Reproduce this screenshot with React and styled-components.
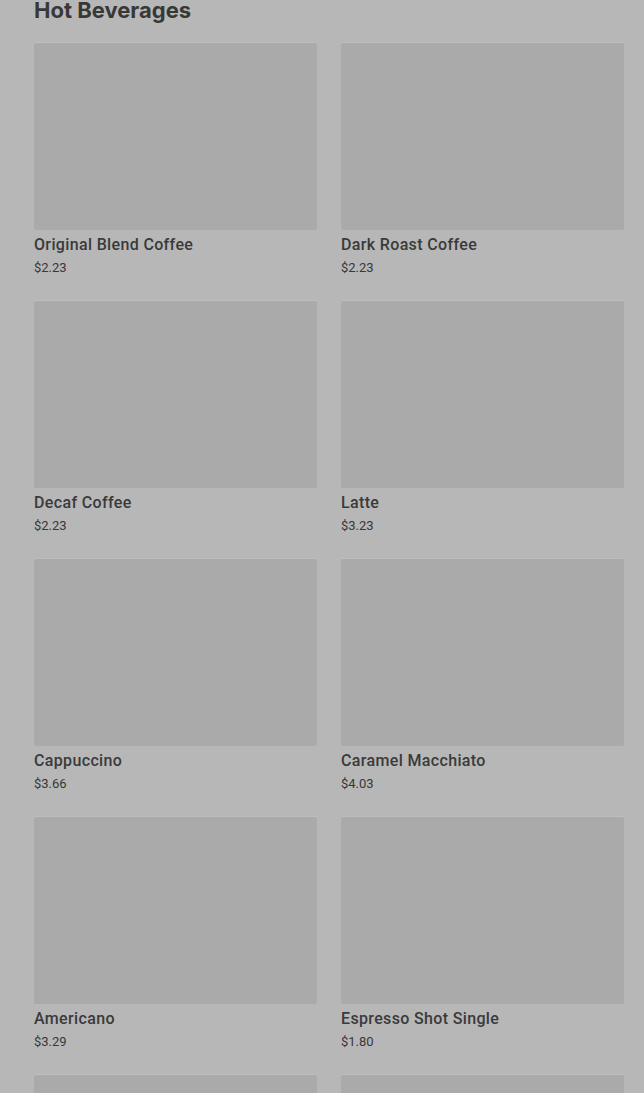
import React from 'react';
import styled, { createGlobalStyle } from 'styled-components';

const GlobalStyle = createGlobalStyle`
  html, body {
    margin: 0;
    padding: 0;
    background: #b7b7b7;
  }
  body {
    font-family: Roboto, "Liberation Sans", sans-serif;
    overflow: hidden;
  }
`;

const Wrapper = styled.div`
  padding: 0 20px 0 34px;
  height: 1093px;
  overflow: hidden;

  .heading {
    margin: 0;
    font-family: Inter, "Liberation Sans", sans-serif;
    font-weight: 700;
    font-size: 22px;
    line-height: 20px;
    color: #383838;
    letter-spacing: 0;
    height: 43px;
  }
`;

const Grid = styled.div`
  display: grid;
  grid-template-columns: 283px 283px;
  column-gap: 24px;
  row-gap: 24px;
`;

const Card = styled.div`
  display: flex;
  flex-direction: column;
  height: 234px;
`;

const Thumb = styled.div`
  flex-shrink: 0;
  height: 187px;
  background: #aaaaaa;
  border-radius: 2px;
  box-shadow: 0 -1px 0 #bdbdbd;
`;

const Name = styled.div`
  margin-top: 5px;
  font-size: 16px;
  line-height: 20px;
  font-weight: 500;
  letter-spacing: 0.35px;
  color: #3a3a3a;
`;

const Price = styled.div`
  margin-top: 4px;
  font-size: 13px;
  line-height: 18px;
  color: #383838;
`;

const items = [
  ['Original Blend Coffee', '$2.23'],
  ['Dark Roast Coffee', '$2.23'],
  ['Decaf Coffee', '$2.23'],
  ['Latte', '$3.23'],
  ['Cappuccino', '$3.66'],
  ['Caramel Macchiato', '$4.03'],
  ['Americano', '$3.29'],
  ['Espresso Shot Single', '$1.80'],
  ['Espresso Shot Double', '$2.10'],
  ['Mocha', '$3.89'],
];

export default function App() {
  return (
    <Wrapper>
      <GlobalStyle />
      <h2 className="heading">Hot Beverages</h2>
      <Grid>
        {items.map(([name, price]) => (
          <Card key={name}>
            <Thumb />
            <Name>{name}</Name>
            <Price>{price}</Price>
          </Card>
        ))}
      </Grid>
    </Wrapper>
  );
}
